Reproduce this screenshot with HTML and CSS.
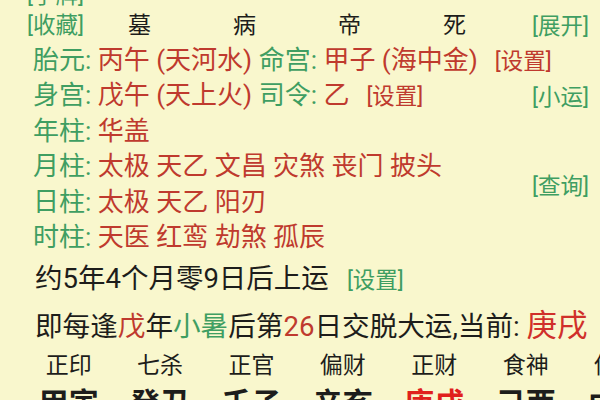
FILE: index.html
```html
<!DOCTYPE html>
<html lang="zh-CN">
<head>
<meta charset="utf-8">
<title>排盘</title>
<link rel="stylesheet" href="styles.css">
</head>
<body>
<div class="page">
  <div class="top">
    <div class="main">
      <div class="row r0"><span class="g btn">[手牌]</span></div>
      <div class="row r1">
        <span class="g btn">[收藏]</span>
        <span class="stage">墓</span>
        <span class="stage">病</span>
        <span class="stage">帝</span>
        <span class="stage">死</span>
      </div>
      <div class="row"><span class="g">胎元:</span> <span class="r">丙午 (天河水)</span> <span class="g">命宫:</span> <span class="r">甲子 (海中金)</span><span class="r btn set">[设置]</span></div>
      <div class="row"><span class="g">身宫:</span> <span class="r">戊午 (天上火)</span> <span class="g">司令:</span> <span class="r">乙</span><span class="r btn set">[设置]</span></div>
      <div class="row"><span class="g">年柱:</span> <span class="r">华盖</span></div>
      <div class="row"><span class="g">月柱:</span> <span class="r">太极 天乙 文昌 灾煞 丧门 披头</span></div>
      <div class="row"><span class="g">日柱:</span> <span class="r">太极 天乙 阳刃</span></div>
      <div class="row"><span class="g">时柱:</span> <span class="r">天医 红鸾 劫煞 孤辰</span></div>
    </div>
    <div class="side">
      <span class="g btn s1">[展开]</span>
      <span class="g btn s2">[小运]</span>
      <span class="g btn s3">[查询]</span>
    </div>
  </div>
  <div class="row r8">约5年4个月零9日后上运<span class="g btn set2">[设置]</span></div>
  <div class="row r9">即每逢<span class="r">戊</span>年<span class="g">小暑</span>后第<span class="r">26</span>日交脱大运,当前: <span class="cur">庚戌</span></div>
  <div class="cells labels">
    <span>正印</span><span>七杀</span><span>正官</span><span>偏财</span><span>正财</span><span>食神</span><span>伤官</span>
  </div>
  <div class="cells pillars">
    <span>甲寅</span><span>癸丑</span><span>壬子</span><span>辛亥</span><span class="now">庚戌</span><span>己酉</span><span>戊申</span>
  </div>
</div>
</body>
</html>
```
FILE: styles.css
```css
html, body {
  margin: 0;
  padding: 0;
  background: #f9f7cd;
  width: 600px;
  height: 400px;
  overflow: hidden;
}
.page {
  font-family: Roboto, "Noto Sans CJK SC", sans-serif;
  color: #1d1d1b;
  margin-top: -21px;
  font-size: 26px;
  white-space: nowrap;
}
.g { color: #3f9e62; }
.r { color: #bf3a2e; }
.top {
  display: grid;
  grid-template-columns: 532px 1fr;
}
.main {
  padding-left: 33px;
}
.row {
  height: 35.5px;
  line-height: 35.5px;
}
.r0 { height: 30px; line-height: 30px; margin-left: -6px; }
.r1 {
  display: flex;
  height: 33.5px;
  line-height: 33.5px;
  margin-left: -6px;
}
.btn {
  font-size: 22.5px;
}
.r1 .btn { width: 60px; }
.stage {
  width: 105px;
  text-align: center;
  font-size: 23px;
}
.set { margin-left: 17px; }
.side {
  display: flex;
  flex-direction: column;
  align-items: flex-start;
}
.side .btn {
  height: 35.5px;
  line-height: 35.5px;
}
.s1 { margin-top: 30px; height: 33.5px; line-height: 33.5px; }
.s2 { margin-top: 35.5px; }
.s3 { margin-top: 53px; }
.r8 {
  height: 45px;
  line-height: 45px;
  padding-left: 35px;
  font-size: 27.5px;
}
.set2 { margin-left: 18px; }
.r9 {
  height: 49px;
  line-height: 49px;
  padding-left: 35px;
  font-size: 27.6px;
}
.cur {
  color: #d0302a;
  font-size: 30.5px;
}
.cells {
  display: flex;
  padding-left: 23px;
}
.cells span {
  flex: 0 0 91.4px;
  text-align: center;
}
.labels {
  height: 31px;
  line-height: 31px;
  font-size: 23px;
}
.pillars {
  height: 45px;
  line-height: 45px;
  font-size: 30px;
  font-weight: bold;
}
.pillars .now { color: #e0201c; }
```
